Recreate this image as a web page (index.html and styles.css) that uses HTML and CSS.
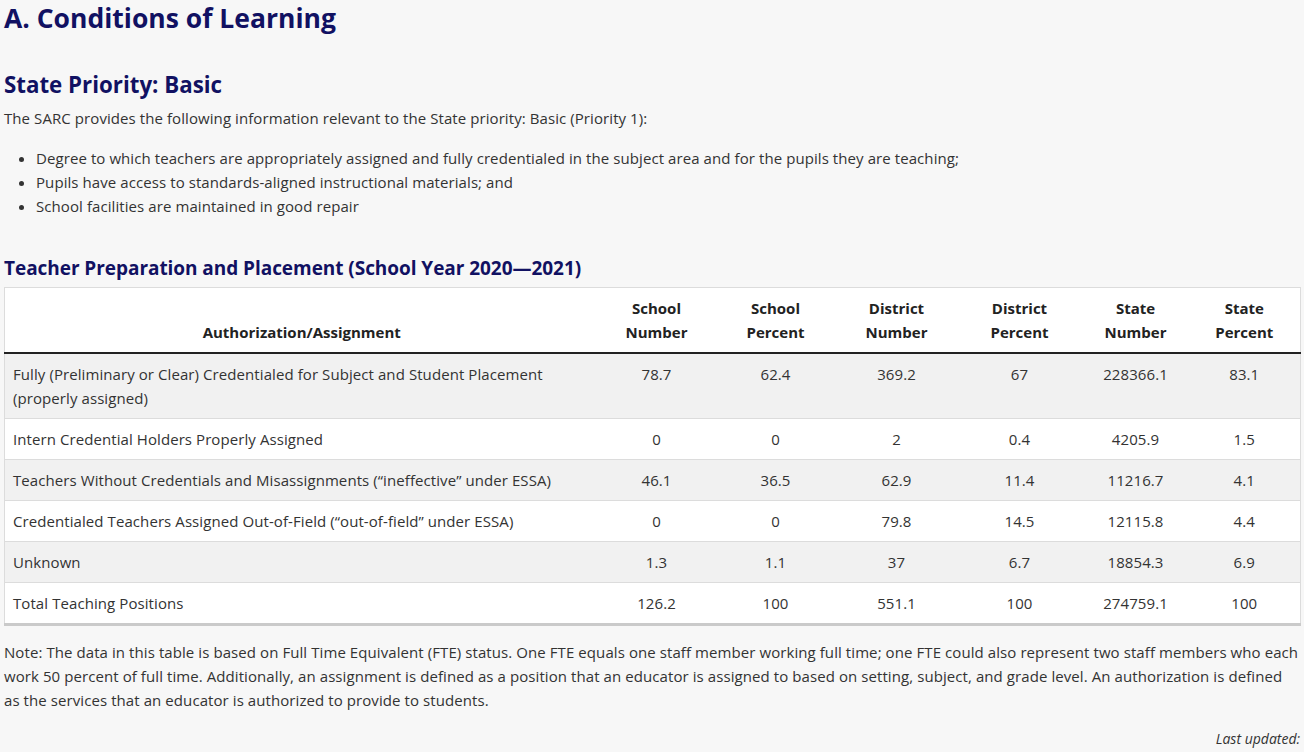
FILE: index.html
```html
<!DOCTYPE html>
<html lang="en">
<head>
<meta charset="utf-8">
<title>Conditions of Learning</title>
<link rel="stylesheet" href="styles.css">
</head>
<body>
<main class="page">
  <h1 class="title">A. Conditions of Learning</h1>
  <h2 class="subtitle">State Priority: Basic</h2>
  <p class="intro">The SARC provides the following information relevant to the State priority: Basic (Priority 1):</p>
  <ul class="list">
    <li>Degree to which teachers are appropriately assigned and fully credentialed in the subject area and for the pupils they are teaching;</li>
    <li>Pupils have access to standards-aligned instructional materials; and</li>
    <li>School facilities are maintained in good repair</li>
  </ul>
  <h3 class="table-title">Teacher Preparation and Placement (School Year 2020—2021)</h3>
  <table class="data">
    <colgroup>
      <col class="c-auth">
      <col class="c-1">
      <col class="c-2">
      <col class="c-3">
      <col class="c-4">
      <col class="c-5">
      <col class="c-6">
    </colgroup>
    <thead>
      <tr>
        <th>Authorization/Assignment</th>
        <th>School<br>Number</th>
        <th>School<br>Percent</th>
        <th>District<br>Number</th>
        <th>District<br>Percent</th>
        <th>State<br>Number</th>
        <th>State<br>Percent</th>
      </tr>
    </thead>
    <tbody>
      <tr>
        <td class="label">Fully (Preliminary or Clear) Credentialed for Subject and Student Placement (properly assigned)</td>
        <td>78.7</td><td>62.4</td><td>369.2</td><td>67</td><td>228366.1</td><td>83.1</td>
      </tr>
      <tr>
        <td class="label">Intern Credential Holders Properly Assigned</td>
        <td>0</td><td>0</td><td>2</td><td>0.4</td><td>4205.9</td><td>1.5</td>
      </tr>
      <tr>
        <td class="label">Teachers Without Credentials and Misassignments (“ineffective” under ESSA)</td>
        <td>46.1</td><td>36.5</td><td>62.9</td><td>11.4</td><td>11216.7</td><td>4.1</td>
      </tr>
      <tr>
        <td class="label">Credentialed Teachers Assigned Out-of-Field (“out-of-field” under ESSA)</td>
        <td>0</td><td>0</td><td>79.8</td><td>14.5</td><td>12115.8</td><td>4.4</td>
      </tr>
      <tr>
        <td class="label">Unknown</td>
        <td>1.3</td><td>1.1</td><td>37</td><td>6.7</td><td>18854.3</td><td>6.9</td>
      </tr>
      <tr>
        <td class="label">Total Teaching Positions</td>
        <td>126.2</td><td>100</td><td>551.1</td><td>100</td><td>274759.1</td><td>100</td>
      </tr>
    </tbody>
  </table>
  <p class="note">Note: The data in this table is based on Full Time Equivalent (FTE) status. One FTE equals one staff member working full time; one FTE could also represent two staff members who each work 50 percent of full time. Additionally, an assignment is defined as a position that an educator is assigned to based on setting, subject, and grade level. An authorization is defined as the services that an educator is authorized to provide to students.</p>
  <p class="updated">Last updated:</p>
</main>
</body>
</html>
```

FILE: styles.css
```css
html, body {
  margin: 0;
  padding: 0;
  background: #f7f7f7;
}

body {
  font-family: "Open Sans", "Noto Sans", "Liberation Sans", sans-serif;
  font-size: 15px;
  letter-spacing: 0.08px;
  line-height: 24px;
  color: #333;
}

.page {
  padding: 0 4px;
}

.title {
  margin: 0;
  font-size: 26.5px;
  line-height: 36px;
  font-weight: 700;
  letter-spacing: 0;
  color: #111162;
}

.subtitle {
  margin: 34px 0 0;
  font-size: 22.3px;
  line-height: 30px;
  font-weight: 700;
  letter-spacing: 0;
  color: #111162;
}

.intro {
  margin: 6px 0 0;
}

.list {
  margin: 16px 0 0;
  padding-left: 32px;
}

.table-title {
  margin: 37px 0 0;
  font-size: 19px;
  line-height: 26px;
  font-weight: 700;
  letter-spacing: -0.05px;
  color: #111162;
}

.data {
  margin-top: 6px;
  width: 1296px;
  table-layout: fixed;
  border-collapse: collapse;
  background: #fff;
  border: 1px solid #dcdcdc;
  border-bottom: 3px solid #cacaca;
}

.c-auth { width: 594px; }
.c-1 { width: 116px; }
.c-2 { width: 122px; }
.c-3 { width: 120px; }
.c-4 { width: 126px; }
.c-5 { width: 106px; }
.c-6 { width: 112px; }

.data th {
  padding: 8px;
  vertical-align: bottom;
  text-align: center;
  font-weight: 700;
  letter-spacing: 0;
  color: #222;
  border-bottom: 2px solid #222;
}

.data td {
  padding: 8px;
  text-align: center;
  vertical-align: top;
  border-top: 1px solid #dcdcdc;
}

.data td.label {
  text-align: left;
}

.data tbody tr:nth-child(odd) {
  background: #f1f1f1;
}

.note {
  margin: 14px 0 0;
}

.updated {
  margin: 15px 0 0;
  text-align: right;
  font-style: italic;
  font-size: 14px;
  letter-spacing: 0;
  color: #333;
}
```
